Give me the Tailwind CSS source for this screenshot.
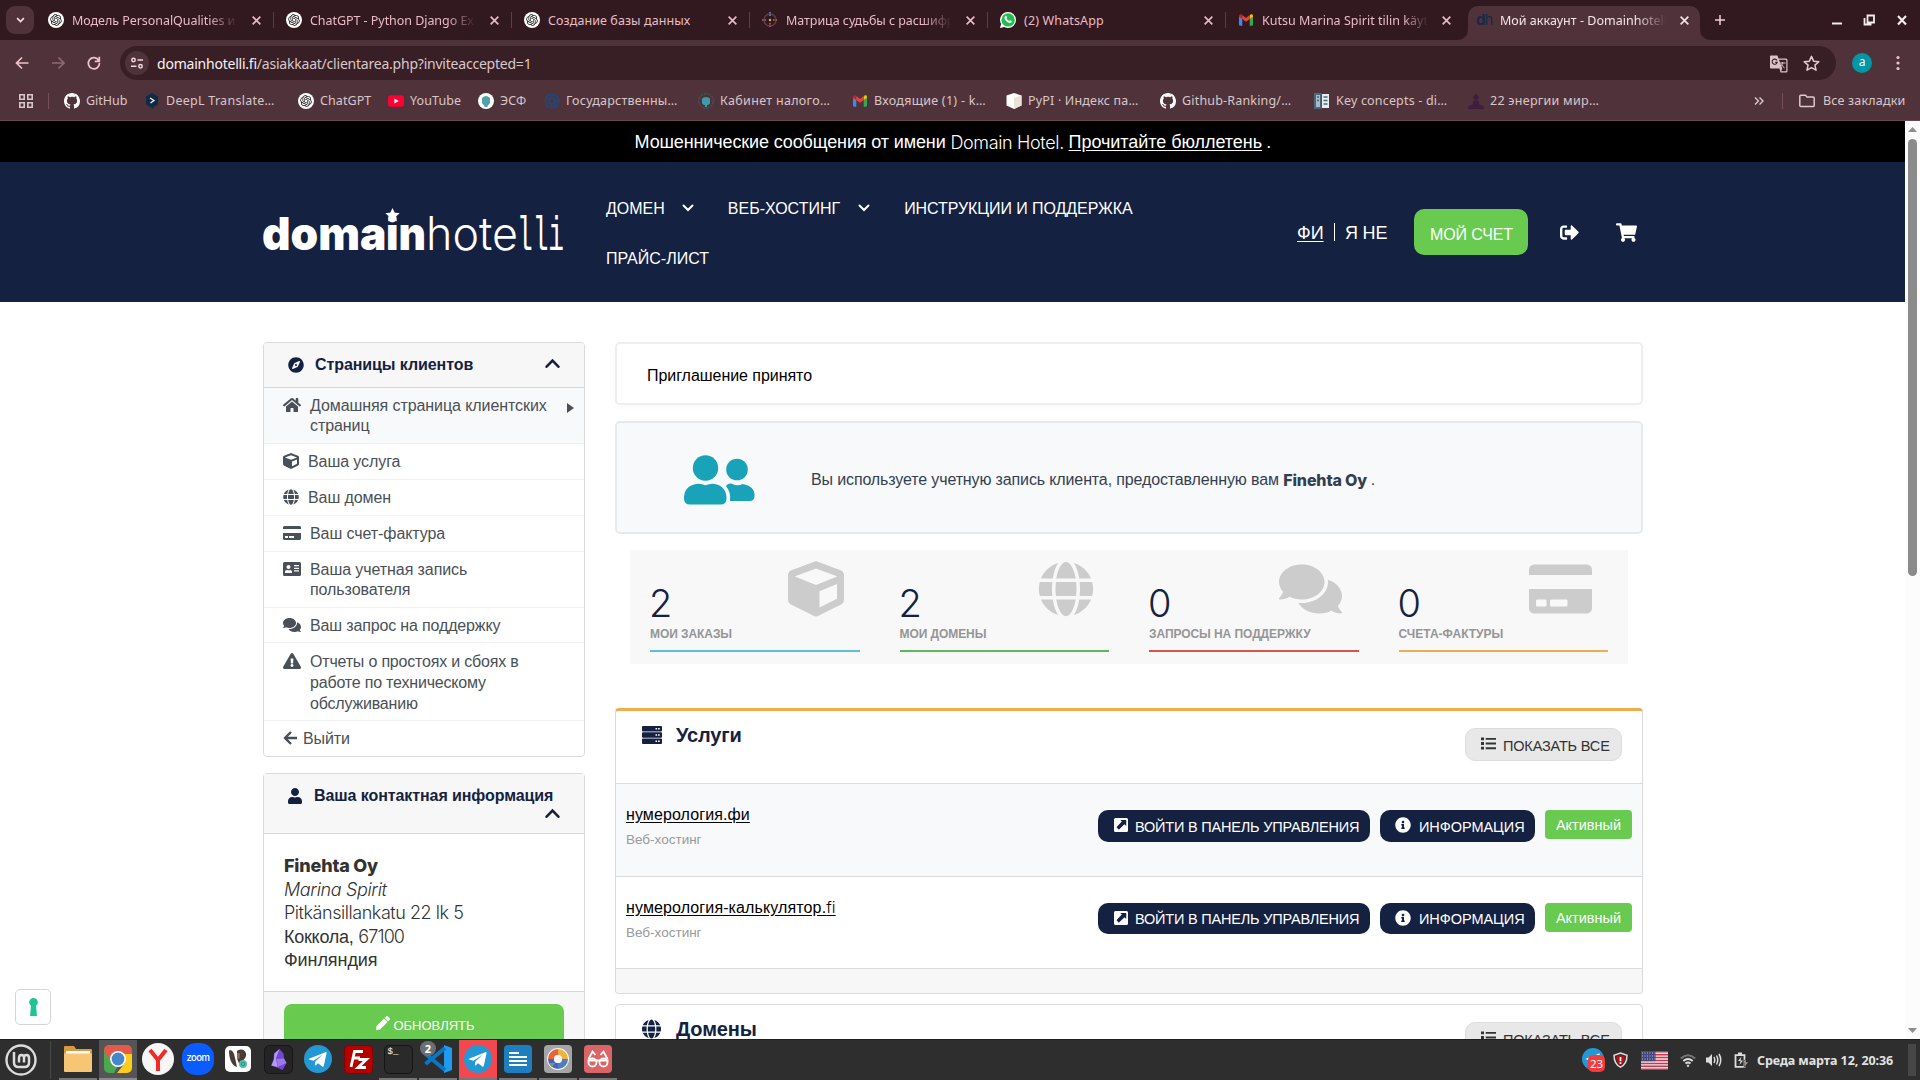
<!DOCTYPE html>
<html lang="ru">
<head>
<meta charset="utf-8">
<title>Мой аккаунт - Domainhotelli</title>
<script src="https://cdn.jsdelivr.net/npm/@tailwindcss/browser@4"></script>
</head>
<body class="w-[1920px] h-[1080px] overflow-hidden bg-white flex flex-col">

<svg class="hidden">
  <symbol id="gpt" viewBox="0 0 32 32"><circle cx="16" cy="16" r="16" fill="#fff"/><g transform="translate(4.5 4.5) scale(.96)"><path fill="#111" d="M22.2819 9.8211a5.9847 5.9847 0 0 0-.5157-4.9108 6.0462 6.0462 0 0 0-6.5098-2.9A6.0651 6.0651 0 0 0 4.9807 4.1818a5.9847 5.9847 0 0 0-3.9977 2.9 6.0462 6.0462 0 0 0 .7427 7.0966 5.98 5.98 0 0 0 .511 4.9107 6.051 6.051 0 0 0 6.5146 2.9001A5.9847 5.9847 0 0 0 13.2599 24a6.0557 6.0557 0 0 0 5.7718-4.2058 5.9894 5.9894 0 0 0 3.9977-2.9001 6.0557 6.0557 0 0 0-.7475-7.0729zm-9.022 12.6081a4.4755 4.4755 0 0 1-2.8764-1.0408l.1419-.0804 4.7783-2.7582a.7948.7948 0 0 0 .3927-.6813v-6.7369l2.02 1.1686a.071.071 0 0 1 .038.052v5.5826a4.504 4.504 0 0 1-4.4945 4.4944zm-9.6607-4.1254a4.4708 4.4708 0 0 1-.5346-3.0137l.142.0852 4.783 2.7582a.7712.7712 0 0 0 .7806 0l5.8428-3.3685v2.3324a.0804.0804 0 0 1-.0332.0615L9.74 19.9502a4.4992 4.4992 0 0 1-6.1408-1.6464zM2.3408 7.8956a4.485 4.485 0 0 1 2.3655-1.9728V11.6a.7664.7664 0 0 0 .3879.6765l5.8144 3.3543-2.0201 1.1685a.0757.0757 0 0 1-.071 0l-4.8303-2.7865A4.504 4.504 0 0 1 2.3408 7.872zm16.5963 3.8558L13.1038 8.364 15.1192 7.2a.0757.0757 0 0 1 .071 0l4.8303 2.7913a4.4944 4.4944 0 0 1-.6765 8.1042v-5.6772a.79.79 0 0 0-.407-.667zm2.0107-3.0231l-.142-.0852-4.7735-2.7818a.7759.7759 0 0 0-.7854 0L9.409 9.2297V6.8974a.0662.0662 0 0 1 .0284-.0615l4.8303-2.7866a4.4992 4.4992 0 0 1 6.6802 4.66zM8.3065 12.863l-2.02-1.1638a.0804.0804 0 0 1-.038-.0567V6.0742a4.4992 4.4992 0 0 1 7.3757-3.4537l-.142.0805L8.704 5.459a.7948.7948 0 0 0-.3927.6813zm1.0976-2.3654l2.602-1.4998 2.6069 1.4998v2.9994l-2.5974 1.4997-2.6067-1.4997Z"/></g></symbol>
  <symbol id="github" viewBox="0 0 16 16"><path fill="#fff" d="M8 0C3.58 0 0 3.58 0 8c0 3.54 2.29 6.53 5.47 7.59.4.07.55-.17.55-.38 0-.19-.01-.82-.01-1.49-2.01.37-2.53-.49-2.69-.94-.09-.23-.48-.94-.82-1.13-.28-.15-.68-.52-.01-.53.63-.01 1.08.58 1.23.82.72 1.21 1.87.87 2.33.66.07-.52.28-.87.51-1.07-1.78-.2-3.64-.89-3.64-3.95 0-.87.31-1.59.82-2.15-.08-.2-.36-1.02.08-2.12 0 0 .67-.21 2.2.82.64-.18 1.32-.27 2-.27s1.36.09 2 .27c1.53-1.04 2.2-.82 2.2-.82.44 1.1.16 1.92.08 2.12.51.56.82 1.27.82 2.15 0 3.07-1.87 3.75-3.65 3.95.29.25.54.73.54 1.48 0 1.07-.01 1.93-.01 2.2 0 .21.15.46.55.38A8.01 8.01 0 0 0 16 8c0-4.42-3.58-8-8-8z"/></symbol>
  <symbol id="gmail" viewBox="0 0 16 16"><path fill="#4285f4" d="M1 4v8.500c0 .8.500 1.200 1.100 1.200H4.300V6.500z"/><path fill="#34a853" d="M15 4v8.500c0 .8-.5 1.200-1.100 1.200H11.700V6.500z"/><path fill="#fbbc04" d="M11.700 3.800V7L15 4.700V3.700c0-1.400-1.500-2-2.500-1.200z"/><path fill="#c5221f" d="M1 3.700v1L4.300 7V3.800l-.8-1.300C2.500 1.700 1 2.300 1 3.700z"/><path fill="#ea4335" d="M4.300 7V3.100L8 5.900l3.700-2.800V7L8 9.800z"/></symbol>
  <symbol id="x" viewBox="0 0 10 10"><path d="M1.500 1.500l7 7M8.500 1.500l-7 7" stroke="currentColor" stroke-width="1.500" fill="none"/></symbol>
  <symbol id="compass" viewBox="0 0 496 512"><path fill="currentColor" d="M225.380 233.370c-12.500 12.500-12.500 32.760 0 45.250 12.490 12.500 32.760 12.500 45.250 0 12.500-12.500 12.500-32.760 0-45.250-12.500-12.490-32.760-12.490-45.250 0zM248 8C111.030 8 0 119.030 0 256s111.030 248 248 248 248-111.030 248-248S384.970 8 248 8zm126.140 148.050L308.170 300.400a31.938 31.938 0 0 1-15.770 15.770l-144.340 65.970c-16.650 7.610-33.810-9.550-26.200-26.200l65.980-144.350a31.938 31.938 0 0 1 15.770-15.770l144.340-65.970c16.650-7.600 33.800 9.550 26.190 26.200z"/></symbol>
  <symbol id="home" viewBox="0 0 576 512"><path fill="currentColor" d="M280.370 148.260L96 300.110V464a16 16 0 0 0 16 16l112.060-.29a16 16 0 0 0 15.920-16V368a16 16 0 0 1 16-16h64a16 16 0 0 1 16 16v95.640a16 16 0 0 0 16 16.050L464 480a16 16 0 0 0 16-16V300L295.670 148.260a12.190 12.190 0 0 0-15.300 0zM571.600 251.470L488 182.560V44.050a12 12 0 0 0-12-12h-56a12 12 0 0 0-12 12v72.610L318.470 43a48 48 0 0 0-61 0L4.340 251.470a12 12 0 0 0-1.600 16.900l25.500 31A12 12 0 0 0 45.150 301l235.220-193.740a12.190 12.190 0 0 1 15.300 0L530.900 301a12 12 0 0 0 16.900-1.600l25.500-31a12 12 0 0 0-1.700-16.930z"/></symbol>
  <symbol id="cube" viewBox="0 0 512 512"><path fill="currentColor" d="M239.100 6.300l-208 78c-18.700 7-31.100 25-31.100 45v225.100c0 18.200 10.300 34.800 26.500 42.900l208 104c13.500 6.800 29.400 6.800 42.900 0l208-104c16.300-8.100 26.500-24.800 26.500-42.900V129.300c0-20-12.400-37.900-31.100-44.900l-208-78C262 2.200 250 2.200 239.100 6.300zM256 68.400l192 72v1.100l-192 78-192-78v-1.100l192-72zm32 356V275.500l160-65v133.900l-160 80z"/></symbol>
  <symbol id="globe" viewBox="0 0 496 512"><path fill="currentColor" d="M336.500 160C322 70.700 287.800 8 248 8s-74 62.700-88.500 152h177zM152 256c0 22.200 1.200 43.500 3.300 64h185.300c2.100-20.500 3.300-41.800 3.300-64s-1.200-43.500-3.300-64H155.300c-2.100 20.500-3.300 41.800-3.300 64zm324.700-96c-28.600-67.900-86.500-120.400-158-141.600 24.400 33.800 41.200 84.700 50 141.600h108zM177.200 18.400C105.800 39.600 47.800 92.100 19.300 160h108c8.700-56.900 25.500-107.800 49.900-141.600zM487.400 192H372.700c2.100 21 3.300 42.500 3.300 64s-1.200 43-3.300 64h114.600c5.500-20.500 8.600-41.800 8.600-64s-3.100-43.500-8.500-64zM120 256c0-21.500 1.200-43 3.300-64H8.600C3.200 212.500 0 233.800 0 256s3.200 43.500 8.600 64h114.600c-2-21-3.200-42.500-3.200-64zm39.500 96c14.500 89.300 48.700 152 88.500 152s74-62.700 88.500-152h-177zm159.300 141.600c71.400-21.200 129.400-73.700 158-141.600h-108c-8.800 56.900-25.600 107.800-50 141.600zM19.300 352c28.600 67.900 86.500 120.400 158 141.600-24.400-33.800-41.200-84.700-50-141.600h-108z"/></symbol>
  <symbol id="card" viewBox="0 0 576 512"><path fill="currentColor" d="M0 432c0 26.500 21.500 48 48 48h480c26.500 0 48-21.500 48-48V256H0v176zm192-68c0-6.600 5.400-12 12-12h136c6.600 0 12 5.400 12 12v40c0 6.600-5.400 12-12 12H204c-6.600 0-12-5.400-12-12v-40zm-128 0c0-6.600 5.400-12 12-12h72c6.600 0 12 5.400 12 12v40c0 6.600-5.400 12-12 12H76c-6.600 0-12-5.400-12-12v-40zM576 80v48H0V80c0-26.500 21.500-48 48-48h480c26.500 0 48 21.500 48 48z"/></symbol>
  <symbol id="idcard" viewBox="0 0 576 512"><path fill="currentColor" fill-rule="evenodd" d="M48 32h480a48 48 0 0 1 48 48v352a48 48 0 0 1-48 48H48a48 48 0 0 1-48-48V80a48 48 0 0 1 48-48zM176 128a64 64 0 1 0 0 128a64 64 0 1 0 0-128zM86 384h180c12 0 22-9 22-20v-19c0-32-30-58-67-58-7 0-20 10-45 10s-38-10-45-10c-37 0-67 26-67 58v19c0 11 10 20 22 20zM360 128h144a8 8 0 0 1 8 8v24a8 8 0 0 1-8 8H360a8 8 0 0 1-8-8v-24a8 8 0 0 1 8-8zM360 212h144a8 8 0 0 1 8 8v24a8 8 0 0 1-8 8H360a8 8 0 0 1-8-8v-24a8 8 0 0 1 8-8zM360 296h144a8 8 0 0 1 8 8v24a8 8 0 0 1-8 8H360a8 8 0 0 1-8-8v-24a8 8 0 0 1 8-8z"/></symbol>
  <symbol id="comments" viewBox="0 0 576 512"><path fill="currentColor" d="M416 192c0-88.400-93.100-160-208-160S0 103.600 0 192c0 34.300 14.100 65.900 38 92-13.400 30.200-35.500 54.200-35.800 54.500-2.200 2.300-2.800 5.700-1.500 8.700S4.800 352 8 352c36.600 0 66.900-12.300 88.700-25 32.200 15.700 70.300 25 111.300 25 114.900 0 208-71.600 208-160zm122 220c23.900-26 38-57.700 38-92 0-66.900-53.500-124.200-129.300-148.100.9 6.600 1.300 13.300 1.300 20.100 0 105.900-107.700 192-240 192-10.800 0-21.300-.8-31.700-1.900C207.800 439.600 281.800 480 368 480c41 0 79.100-9.200 111.300-25 21.800 12.700 52.100 25 88.700 25 3.200 0 6.100-1.900 7.300-4.800 1.300-2.900.7-6.300-1.500-8.700-.3-.3-22.400-24.200-35.800-54.500z"/></symbol>
  <symbol id="warn" viewBox="0 0 576 512"><path fill="currentColor" d="M569.517 440.013C587.975 472.007 564.806 512 527.940 512H48.054c-36.937 0-59.999-40.055-41.577-71.987L246.423 23.985c18.467-32.009 64.720-31.951 83.154 0l239.940 416.028zM288 354c-25.405 0-46 20.595-46 46s20.595 46 46 46 46-20.595 46-46-20.595-46-46-46zm-43.673-165.346l7.418 136c.347 6.364 5.609 11.346 11.982 11.346h48.546c6.373 0 11.635-4.982 11.982-11.346l7.418-136c.375-6.874-5.098-12.654-11.982-12.654h-63.383c-6.884 0-12.356 5.780-11.981 12.654z"/></symbol>
  <symbol id="user" viewBox="0 0 448 512"><path fill="currentColor" d="M224 256c70.700 0 128-57.300 128-128S294.700 0 224 0 96 57.300 96 128s57.300 128 128 128zm89.600 32h-16.700c-22.200 10.200-46.900 16-72.900 16s-50.600-5.800-72.900-16h-16.700C60.200 288 0 348.200 0 422.400V464c0 26.500 21.500 48 48 48h352c26.500 0 48-21.500 48-48v-41.600c0-74.200-60.200-134.400-134.400-134.400z"/></symbol>
  <symbol id="list" viewBox="0 0 16 16"><path fill="currentColor" d="M0 1.500h3.200v3H0zM0 6.500h3.200v3H0zM0 11.500h3.200v3H0zM5 2h11v2H5zM5 7h11v2H5zM5 12h11v2H5z"/></symbol>
  <symbol id="ext" viewBox="0 0 448 448"><path fill="currentColor" fill-rule="evenodd" d="M48 0h352a48 48 0 0 1 48 48v352a48 48 0 0 1-48 48H48a48 48 0 0 1-48-48V48A48 48 0 0 1 48 0zM208 64v8l43 43L90 278a20 20 0 0 0 0 28l52 52a20 20 0 0 0 28 0L333 197l43 43c10 10 16 6 16-8V80c0-9-7-16-16-16z"/></symbol>
  <symbol id="info" viewBox="0 0 512 512"><path fill="currentColor" d="M256 8C119.043 8 8 119.083 8 256c0 136.997 111.043 248 248 248s248-111.003 248-248C504 119.083 392.957 8 256 8zm0 110c23.196 0 42 18.804 42 42s-18.804 42-42 42-42-18.804-42-42 18.804-42 42-42zm56 254c0 6.627-5.373 12-12 12h-88c-6.627 0-12-5.373-12-12v-24c0-6.627 5.373-12 12-12h12v-64h-12c-6.627 0-12-5.373-12-12v-24c0-6.627 5.373-12 12-12h64c6.627 0 12 5.373 12 12v100h12c6.627 0 12 5.373 12 12v24z"/></symbol>
  <symbol id="up" viewBox="0 0 14 10"><path d="M1.500 8L7 2.300 12.500 8" fill="none" stroke="currentColor" stroke-width="2.400" stroke-linecap="round"/></symbol>
  <symbol id="down" viewBox="0 0 12 8"><path d="M1.500 1.500L6 6l4.500-4.500" fill="none" stroke="#fff" stroke-width="2" stroke-linecap="round"/></symbol>
  <symbol id="telegram" viewBox="0 0 28 28"><circle cx="14" cy="14" r="14" fill="#2498d4"/><path fill="#fff" d="M5 13.700l16.300-6.500c.8-.3 1.400.2 1.200 1.200l-2.700 12.400c-.2.900-.8 1.100-1.500.7l-4.300-3.200-2.100 2c-.5.500-1 .2-1-.3l.2-3.300 7.300-6.900-9 5.900-4.200-1.300c-.8-.2-.8-.5-.2-.7z"/></symbol>
</svg>

<!-- Browser window frame -->
<div class="h-[121px] shrink-0 bg-[#50333a] border-b border-[#65494f] font-['Noto_Sans',sans-serif] flex flex-col">
  <div class="h-10 bg-[#32191f] flex text-[12.500px] tracking-[-0.050px] text-[#e9bcc6]">
    <div class="w-10 shrink-0 pt-[6px] pl-[6px]"><div class="size-7 rounded-[9px] bg-[#50333a] flex items-center justify-center"><svg class="w-[9px] h-[6px]" viewBox="0 0 12 8"><path d="M1.500 1.500L6 6l4.500-4.500" fill="none" stroke="#f3dfe3" stroke-width="2.300"/></svg></div></div>

    <div class="w-[238px] shrink-0 flex items-center pl-2 relative"><svg class="size-4 shrink-0"><use href="#gpt"/></svg><div class="ml-2 pt-[2px] w-[166px] overflow-hidden whitespace-nowrap [mask-image:linear-gradient(90deg,#000_82%,transparent)]">Модель PersonalQualities и</div><svg class="size-[11px] ml-[13px]"><use href="#x"/></svg><div class="absolute right-1 top-3 w-px h-4 bg-[#5d3d45]"></div></div>
    <div class="w-[238px] shrink-0 flex items-center pl-2 relative"><svg class="size-4 shrink-0"><use href="#gpt"/></svg><div class="ml-2 pt-[2px] w-[166px] overflow-hidden whitespace-nowrap [mask-image:linear-gradient(90deg,#000_82%,transparent)]">ChatGPT - Python Django Ex</div><svg class="size-[11px] ml-[13px]"><use href="#x"/></svg><div class="absolute right-1 top-3 w-px h-4 bg-[#5d3d45]"></div></div>
    <div class="w-[238px] shrink-0 flex items-center pl-2 relative"><svg class="size-4 shrink-0"><use href="#gpt"/></svg><div class="ml-2 pt-[2px] w-[166px] overflow-hidden whitespace-nowrap tracking-[0.080px]">Создание базы данных</div><svg class="size-[11px] ml-[13px]"><use href="#x"/></svg><div class="absolute right-1 top-3 w-px h-4 bg-[#5d3d45]"></div></div>
    <div class="w-[238px] shrink-0 flex items-center pl-2 relative"><svg class="size-4 shrink-0" viewBox="0 0 16 16"><circle cx="8" cy="8" r="6" fill="none" stroke="#5b3f49" stroke-width="1.400"/><path d="M8 0v5" stroke="#5f6fb0" stroke-width="2" stroke-dasharray="1.500 1"/><path d="M8 11v5" stroke="#b04a4a" stroke-width="2" stroke-dasharray="1.500 1"/><path d="M0 8h5M11 8h5" stroke="#905a58" stroke-width="2" stroke-dasharray="1.500 1"/><circle cx="8" cy="8" r="1.200" fill="#d9b25c"/></svg><div class="ml-2 pt-[2px] w-[166px] overflow-hidden whitespace-nowrap tracking-[-0.050px] [mask-image:linear-gradient(90deg,#000_82%,transparent)]">Матрица судьбы с расшифр</div><svg class="size-[11px] ml-[13px]"><use href="#x"/></svg><div class="absolute right-1 top-3 w-px h-4 bg-[#5d3d45]"></div></div>
    <div class="w-[238px] shrink-0 flex items-center pl-2 relative"><svg class="size-4 shrink-0" viewBox="0 0 16 16"><path fill="#fff" d="M8 0a8 8 0 0 1 0 16 8 8 0 0 1-3.800-1L0 16l1.100-4A8 8 0 0 1 8 0z"/><circle cx="8.100" cy="7.900" r="6.700" fill="#1fbf4f"/><path fill="#fff" d="M5.200 4.200c.4-.5 1.100-.5 1.300 0l.6 1.300c.1.300 0 .5-.5 1.100.6 1.200 1.500 1.900 2.600 2.400.5-.7.700-.9 1-.7l1.300.6c.5.300.3 1.200-.2 1.600-.8.700-2 .6-3.600-.3C6 9.200 4.200 7 4.500 5.400c.1-.5.400-.9.700-1.200z"/></svg><div class="ml-2 pt-[2px] w-[166px] overflow-hidden whitespace-nowrap tracking-[0.150px]">(2) WhatsApp</div><svg class="size-[11px] ml-[13px]"><use href="#x"/></svg><div class="absolute right-1 top-3 w-px h-4 bg-[#5d3d45]"></div></div>
    <div class="w-[238px] shrink-0 flex items-center pl-2 relative"><svg class="size-4 shrink-0"><use href="#gmail"/></svg><div class="ml-2 pt-[2px] w-[166px] overflow-hidden whitespace-nowrap tracking-[0.020px] [mask-image:linear-gradient(90deg,#000_85%,transparent)]">Kutsu Marina Spirit tilin käyt</div><svg class="size-[11px] ml-[13px]"><use href="#x"/></svg></div>
    <div class="w-[232px] mt-[6px] h-[34px] shrink-0 flex items-center pl-2 pb-[6px] rounded-t-[10px] bg-[#50333a] text-[#f6e3e7] relative">
      <svg class="absolute -left-[10px] bottom-0 size-[10px]" viewBox="0 0 10 10"><path fill="#50333a" d="M10 0v10H0A10 10 0 0 0 10 0z"/></svg>
      <svg class="absolute -right-[10px] bottom-0 size-[10px]" viewBox="0 0 10 10"><path fill="#50333a" d="M0 0v10h10A10 10 0 0 1 0 0z"/></svg>
      <div class="w-4 shrink-0 font-[Inter,sans-serif] text-[15px] tracking-[-1px] leading-4 text-[#1b2748]"><b>d</b>h</div><div class="ml-2 pt-[2px] w-[166px] overflow-hidden whitespace-nowrap tracking-[0.020px] [mask-image:linear-gradient(90deg,#000_82%,transparent)]">Мой аккаунт - Domainhotelli</div><svg class="size-[11px] ml-[13px]"><use href="#x"/></svg></div>
    <div class="w-[40px] flex items-center justify-center"><svg class="size-3" viewBox="0 0 12 12"><path d="M6 1v10M1 6h10" stroke="#f0cdd4" stroke-width="1.500"/></svg></div>
    <div class="flex-1"></div>
    <svg class="w-[90px] h-10 mr-1" viewBox="0 0 90 40"><path d="M6 23.500h10" stroke="#f5eaec" stroke-width="2"/><path d="M41.500 15.500h6.500v7h-6.500zM38.500 18v6.500h7" stroke="#f5eaec" stroke-width="1.800" fill="none"/><path d="M72 16l8 8.500M80 16l-8 8.500" stroke="#f5eaec" stroke-width="2.200"/></svg>
  </div>
  <div class="h-[46px] flex items-center">
    <svg class="w-[120px] h-9 shrink-0" viewBox="0 0 120 36" fill="none" stroke-width="1.700"><path d="M28.500 18H17M22 12.500L16.500 18l5.500 5.500" stroke="#efc3cc"/><path d="M52 18h11.500M58.500 12.500L64 18l-5.500 5.500" stroke="#8c6a72"/><path d="M98.800 15.500A5.600 5.600 0 1 0 99.500 18M99.300 11.800v4.500h-4.500" stroke="#efc3cc"/></svg>
    <div class="w-[1716px] h-[34px] rounded-full bg-[#381f26] flex items-center pl-[5px] text-[14px] tracking-[-0.220px] text-[#d9c8cb]">
      <div class="size-6 rounded-full bg-[#50333a] flex items-center justify-center"><svg class="size-[14px]" viewBox="0 0 14 14" fill="none" stroke="#eed9dd" stroke-width="1.500"><circle cx="3.500" cy="4" r="1.700"/><path d="M7.500 4H13M1 10.200h5.500"/><circle cx="10.500" cy="10.200" r="1.700"/></svg></div>
      <div class="ml-2 flex-1"><span class="text-[#fbf0f2]">domainhotelli.fi</span>/asiakkaat/clientarea.php?inviteaccepted=1</div>
      <svg class="w-[18px] h-[18px] mr-[15px] mt-px" viewBox="0 0 18 17"><path fill="#d9c3c7" d="M1 0h6.500l1 3H16a1.500 1.500 0 0 1 1.500 1.500v11A1.500 1.500 0 0 1 16 17h-5.500l-1-4H1a1 1 0 0 1-1-1V1a1 1 0 0 1 1-1z"/><path fill="#381f26" d="M9 4.200h6.700l.6.600v10.400l-.6.600h-4.500l1-2.800z"/><path d="M7 4.900A2.600 2.600 0 1 0 7.300 6.700H5" fill="none" stroke="#381f26" stroke-width="1.100"/><path d="M10 7.500h5.500M12.500 6.500v1c0 2-1.200 3.200-2 3.800M11.500 9l3 3.800" stroke="#d9c3c7" fill="none"/></svg>
      <svg class="size-[17px] mr-[16px]" viewBox="0 0 16 16"><path fill="none" stroke="#e3cfd3" stroke-width="1.400" stroke-linejoin="round" d="M8 1.300l2 4.500 4.900.5-3.700 3.200 1.100 4.800L8 11.800l-4.300 2.500 1.100-4.800L1.100 6.300 6 5.800z"/></svg>
    </div>
    <div class="ml-4 size-5 rounded-full bg-[#0097a7] text-white text-[12px] leading-[18px] text-center">a</div>
    <svg class="ml-6 w-1 h-4" viewBox="0 0 4 16" fill="#efc3cc"><circle cx="2" cy="2.500" r="1.600"/><circle cx="2" cy="8" r="1.600"/><circle cx="2" cy="13.500" r="1.600"/></svg>
  </div>
  <div class="h-[30px] flex items-center text-[12.500px] text-[#d8c6c9] whitespace-nowrap">
    <svg class="ml-[19px] size-[14px] shrink-0" viewBox="0 0 14 14" fill="none" stroke="#d8c6c9" stroke-width="1.600"><path d="M.8.8h4.400v4.400H.8zM8.800.8h4.400v4.400H8.800zM.8 8.800h4.400v4.400H.8zM8.800 8.800h4.400v4.400H8.800z"/></svg>
    <div class="ml-[15px] w-px h-4 bg-[#735057] shrink-0"></div>
    <div class="ml-[15px] w-[80px] shrink-0 flex items-center gap-[6px]"><svg class="size-4"><use href="#github"/></svg>GitHub</div>
    <div class="w-[154px] shrink-0 flex items-center gap-[6px] tracking-[0.270px]"><svg class="size-4" viewBox="0 0 16 16"><path fill="#0f2b46" d="M8 0l6 3.500v8L9.500 14v2L2 11.500v-8z"/><path d="M6 5l4 2.500L6.500 10" fill="none" stroke="#fff" stroke-width="1.200"/></svg>DeepL Translate…</div>
    <div class="w-[90px] shrink-0 flex items-center gap-[6px] tracking-[0.080px]"><svg class="size-4"><use href="#gpt"/></svg>ChatGPT</div>
    <div class="w-[90px] shrink-0 flex items-center gap-[6px] tracking-[0.100px]"><svg class="size-4" viewBox="0 0 16 16"><rect y="2.300" width="16" height="11.400" rx="3" fill="#ff0033"/><path d="M6.400 5.500v5l4.300-2.500z" fill="#fff"/></svg>YouTube</div>
    <div class="w-[66px] shrink-0 flex items-center gap-[6px] tracking-[0.200px]"><svg class="size-4" viewBox="0 0 16 16"><circle cx="8" cy="8" r="8" fill="#fff"/><path fill="#4fa3a8" d="M4 5l2-1.500L8 3l2 .5L12 5v5l-2 2.500H9.500V14h-3v-1.500H6L4 10z"/></svg>ЭСФ</div>
    <div class="w-[154px] shrink-0 flex items-center gap-[6px] tracking-[0.250px]"><svg class="size-4" viewBox="0 0 16 16"><circle cx="8" cy="8" r="6.500" fill="none" stroke="#1e4a80" stroke-width="2.500" stroke-dasharray="1.500 .8"/><circle cx="8" cy="8" r="3.200" fill="none" stroke="#1e4a80" stroke-width="3" stroke-dasharray="1.500 .8"/></svg>Государственны…</div>
    <div class="w-[154px] shrink-0 flex items-center gap-[6px] tracking-[0.320px]"><svg class="size-4" viewBox="0 0 16 16"><circle cx="8" cy="8" r="7.300" fill="none" stroke="#3d5f68" stroke-width="1" stroke-dasharray="3 1"/><path fill="#3f9ba8" d="M4 5.500l2-1L8 4l2 .5 2 1v5l-2 1.500H9V14H7v-2H6l-2-1.500z"/></svg>Кабинет налого…</div>
    <div class="w-[154px] shrink-0 flex items-center gap-[6px] tracking-[0.280px]"><svg class="size-4"><use href="#gmail"/></svg>Входящие (1) - k…</div>
    <div class="w-[154px] shrink-0 flex items-center gap-[6px] tracking-[0.180px]"><svg class="size-4" viewBox="0 0 16 16"><path fill="#fdfdfb" d="M8 0l7.500 2.500v10L8 16 .5 12.500v-10z"/><path fill="#e6e3da" d="M8 5l7.500-2.500v10L8 16z"/></svg>PyPI · Индекс па…</div>
    <div class="w-[154px] shrink-0 flex items-center gap-[6px] tracking-[0.180px]"><svg class="size-4"><use href="#github"/></svg>Github-Ranking/…</div>
    <div class="w-[154px] shrink-0 flex items-center gap-[6px] tracking-[0.180px]"><svg class="size-4" viewBox="0 0 16 16"><path fill="#49697a" d="M0 0h7.500v16H0z"/><path fill="#e7edf0" d="M8 1h7v14H8z"/><path fill="#a9bcc6" d="M2 2h4v12H2z"/><path stroke="#49697a" stroke-width="1.300" d="M9.500 4h4M9.500 7.500h4M9.500 11h4M3 4h2M3 7.500h2"/></svg>Key concepts - di…</div>
    <div class="w-[154px] shrink-0 flex items-center gap-[6px] tracking-[0.270px]"><svg class="size-4" viewBox="0 0 16 16"><path fill="#3d1d40" d="M8 .5l3 3.500-1.500 3H6.500L5 4zM5.500 7.500h5l1 4L16 13.500V16H0v-2.500l4.500-2z"/></svg>22 энергии мир…</div>
    <div class="flex-1"></div>
    <svg class="w-[10px] h-2 shrink-0" viewBox="0 0 10 8"><path d="M1 .5L4.500 4 1 7.500M5.500.5L9 4 5.500 7.500" stroke="#dccacd" stroke-width="1.400" fill="none"/></svg>
    <div class="ml-[18px] w-px h-4 bg-[#735057] shrink-0"></div>
    <svg class="ml-4 w-4 h-[14px] shrink-0" viewBox="0 0 16 14"><path d="M.8 2.500v9q0 1 1 1h12.400q1 0 1-1V4q0-1-1-1H8L6.500 1.300H1.800q-1 0-1 1.200z" fill="none" stroke="#dccacd" stroke-width="1.500"/></svg>
    <div class="ml-2 w-[82px] mr-[15px] shrink-0 tracking-[0.180px]">Все закладки</div>
  </div>
</div>

<!-- Page -->
<div class="h-[918px] shrink-0 flex overflow-hidden">
<div class="w-[1905px] shrink-0 flex flex-col relative overflow-hidden font-['Liberation_Sans',Arial,sans-serif]">
  <div class="h-[41px] shrink-0 bg-black text-white text-[18px] pt-px flex items-center justify-center whitespace-pre"><span class="tracking-[-0.130px]">Мошеннические сообщения от имени </span><span class="font-[Inter,sans-serif] font-light tracking-[-0.350px]">Domain Hotel. </span><span class="underline underline-offset-2 tracking-[-0.050px]">Прочитайте бюллетень</span><span class="tracking-[-0.800px]"> .</span></div>

  <div class="h-[140px] shrink-0 bg-[#152141] text-white flex pl-[263px]">
    <svg class="w-[302px] h-[44px] mt-[47px] shrink-0 overflow-visible" viewBox="0 0 302 44" fill="#fff">
      <text y="41" font-family="Inter" font-weight="900" font-size="46"><tspan x="-1" textLength="124.500" lengthAdjust="spacingAndGlyphs">doma</tspan></text>
      <text x="123" y="41" font-family="Inter" font-weight="900" font-size="46" textLength="40" lengthAdjust="spacingAndGlyphs">in</text>
      <text x="163" y="41" font-family="Inter" font-weight="300" font-size="46" textLength="92" lengthAdjust="spacingAndGlyphs">hote</text>
      <text x="254" y="41" font-family="Liberation Mono" font-size="49" textLength="47" lengthAdjust="spacingAndGlyphs">lli</text>
      <path d="M129.500 .5l1.700 3.600 4 .5-3 2.700.8 4-3.500-2-3.500 2 .8-4-3-2.700 4-.5z" stroke="#fff" stroke-width="1.300"/>
    </svg>
    <div class="ml-[41px] w-[680px] pt-[22px] text-[16px] shrink-0">
      <div class="h-[50px] flex items-center">
        <span>ДОМЕН</span><svg class="ml-[17px] w-3 h-2 -mt-[2px]"><use href="#down"/></svg>
        <span class="ml-[34px]">ВЕБ-ХОСТИНГ</span><svg class="ml-[18px] w-3 h-2 -mt-[2px]"><use href="#down"/></svg>
        <span class="ml-[34px] tracking-[-0.070px]">ИНСТРУКЦИИ И ПОДДЕРЖКА</span>
      </div>
      <div class="h-[50px] flex items-center">ПРАЙС-ЛИСТ</div>
    </div>
    <div class="h-[140px] flex items-center ml-[11px] text-[18px] shrink-0">
      <span class="underline underline-offset-2 w-[27px] pt-[2px]">ФИ</span>
      <div class="ml-[10px] w-px h-[18px] bg-white"></div>
      <span class="ml-[10px] w-[69px] pt-[2px] tracking-[-0.200px]">Я НЕ</span>
      <div class="w-[114px] h-[46px] rounded-[10px] bg-[#68ca4f] flex items-center justify-center text-[16px] tracking-[-0.100px] pl-px pt-[6px]">МОЙ СЧЕТ</div>
      <svg class="ml-8 size-[19px]" viewBox="0 0 512 512"><path fill="#fff" d="M497 273L329 441c-15 15-41 4.500-41-17v-96H152c-13.300 0-24-10.700-24-24v-96c0-13.300 10.700-24 24-24h136V88c0-21.400 25.900-32 41-17l168 168c9.300 9.400 9.300 24.600 0 34zM192 436v-40c0-6.600-5.400-12-12-12H96c-17.700 0-32-14.300-32-32V160c0-17.700 14.300-32 32-32h84c6.600 0 12-5.400 12-12V76c0-6.600-5.400-12-12-12H96c-53 0-96 43-96 96v192c0 53 43 96 96 96h84c6.600 0 12-5.400 12-12z"/></svg>
      <svg class="ml-[37px] w-[21px] h-[19px]" viewBox="0 0 576 512"><path fill="#fff" d="M528.120 301.319l47.273-208C578.806 78.301 567.391 64 551.990 64H159.208l-9.166-44.810C147.758 8.021 137.930 0 126.529 0H24C10.745 0 0 10.745 0 24v16c0 13.255 10.745 24 24 24h69.883l70.248 343.435C147.325 417.100 136 435.222 136 456c0 30.928 25.072 56 56 56s56-25.072 56-56c0-15.674-6.447-29.835-16.824-40h209.647C430.447 426.165 424 440.326 424 456c0 30.928 25.072 56 56 56s56-25.072 56-56c0-22.172-12.888-41.332-31.579-50.405l5.517-24.276c3.413-15.018-8.002-29.319-23.403-29.319H218.117l-6.545-32h293.145c11.206 0 20.920-7.754 23.403-18.681z"/></svg>
    </div>
  </div>

  <div class="flex pl-[263px] pt-10 items-start">
    <!-- Sidebar -->
    <div class="w-[322px] shrink-0 flex flex-col gap-4 tracking-[-0.080px]">
      <div class="border border-[#dadada] rounded-[4px] overflow-hidden text-[16px] leading-[20.500px] text-[#495057]">
        <div class="h-[45px] bg-[#f7f7f7] border-b border-[#d6d6d6] flex items-center pl-6 pr-[24px] font-bold text-[#152141]"><svg class="size-4"><use href="#compass"/></svg><span class="ml-[11px] flex-1">Страницы клиентов</span><svg class="w-[15px] h-[11px] -mt-[3px]"><use href="#up"/></svg></div>
        <div class="h-[56px] bg-[#f8f9fb] border-b border-[#f1f1f1] flex pt-[8px] pl-[19px]"><svg class="w-[18px] h-4 mt-px shrink-0"><use href="#home"/></svg><span class="ml-[9px] w-[245px] leading-5 shrink-0">Домашняя страница клиентских страниц</span><svg class="ml-[12px] mt-[7px] w-[7px] h-[10px]" viewBox="0 0 7 10"><path d="M0 0l7 5-7 5z" fill="#495057"/></svg></div>
        <div class="h-9 border-b border-[#f1f1f1] flex pt-[8px] pl-[19px]"><svg class="size-4 mt-px"><use href="#cube"/></svg><span class="ml-[9px]">Ваша услуга</span></div>
        <div class="h-9 border-b border-[#f1f1f1] flex pt-[8px] pl-[19px]"><svg class="size-4 mt-px"><use href="#globe"/></svg><span class="ml-[9px]">Ваш домен</span></div>
        <div class="h-9 border-b border-[#f1f1f1] flex pt-[8px] pl-[19px]"><svg class="w-[18px] h-4 mt-px"><use href="#card"/></svg><span class="ml-[9px]">Ваш счет-фактура</span></div>
        <div class="h-[56px] border-b border-[#f1f1f1] flex pt-[8px] pl-[19px]"><svg class="w-[18px] h-4 mt-px shrink-0"><use href="#idcard"/></svg><span class="ml-[9px] w-[180px] leading-5">Ваша учетная запись пользователя</span></div>
        <div class="h-[35px] border-b border-[#f1f1f1] flex pt-[8px] pl-[19px]"><svg class="w-[18px] h-4 mt-px"><use href="#comments"/></svg><span class="ml-[9px] tracking-[-0.150px]">Ваш запрос на поддержку</span></div>
        <div class="h-[78px] border-b border-[#f1f1f1] flex pt-[8px] pl-[19px]"><svg class="w-[18px] h-4 mt-[2px] shrink-0"><use href="#warn"/></svg><span class="ml-[9px] w-[225px] leading-[21px] tracking-[-0.190px]">Отчеты о простоях и сбоях в работе по техническому обслуживанию</span></div>
        <div class="h-[35px] flex pt-[8px] pl-[19px]"><svg class="w-[15px] h-4 mt-px" viewBox="0 0 15 16"><path d="M8 2L2 8l6 6M2.500 8H14" fill="none" stroke="#495057" stroke-width="2.400"/></svg><span class="ml-[5px]">Выйти</span></div>
      </div>
      <div class="border border-[#dadada] rounded-[4px] text-[#333] text-[18px] leading-[23.500px]">
        <div class="h-[60px] bg-[#f7f7f7] border-b border-[#d6d6d6] pl-6 pr-[24px] pt-3 font-bold text-[#152141] text-[16px] leading-5"><div class="flex items-center whitespace-nowrap"><svg class="w-[14px] h-4 mr-[1px]"><use href="#user"/></svg><span class="ml-[11px]">Ваша контактная информация</span></div><svg class="w-[15px] h-[11px] ml-auto mt-[2px]"><use href="#up"/></svg></div>
        <div class="h-[158px] border-b border-[#d6d6d6] pl-5 pt-[20px]">
          <div class="font-[Inter,sans-serif] font-extrabold tracking-[-0.180px]">Finehta Oy</div>
          <div class="font-[Inter,sans-serif] font-light italic tracking-[-0.350px]">Marina Spirit</div>
          <div class="font-[Inter,sans-serif] font-light tracking-[-0.450px]">Pitkänsillankatu 22 lk 5</div>
          <div class="tracking-[-0.250px]">Коккола, <span class="font-[Inter,sans-serif] font-light tracking-[-0.900px]">67100</span></div>
          <div>Финляндия</div>
        </div>
        <div class="bg-[#f7f7f7] h-[80px] px-5 pt-3"><div class="h-[42px] rounded-[8px] bg-[#68ca4f] text-white text-[13px] tracking-normal flex items-center justify-center pt-[2px] pl-[3px]"><svg class="size-[14px] mr-[3px] -mt-[6px]" viewBox="0 0 512 512"><path fill="#fff" d="M497.900 142.100l-46.100 46.100c-4.700 4.700-12.300 4.700-17 0l-111-111c-4.700-4.700-4.700-12.300 0-17l46.100-46.100c18.700-18.700 49.100-18.700 67.900 0l60.100 60.100c18.800 18.700 18.800 49.100 0 67.900zM284.200 99.800L21.600 362.400.4 483.900c-2.900 16.400 11.400 30.600 27.800 27.800l121.500-21.300 262.600-262.600c4.700-4.700 4.700-12.300 0-17l-111-111c-4.800-4.700-12.400-4.700-17.100 0z"/></svg>ОБНОВЛЯТЬ</div></div>
      </div>
    </div>

    <!-- Main column -->
    <div class="ml-[30px] w-[1028px] shrink-0 flex flex-col">
      <div class="h-[63px] rounded-[5px] border-2 border-[#eee] shadow-[0_2px_8px_rgba(0,0,0,0.03)] flex items-center pl-[30px] pt-1 text-[16px] tracking-[-0.050px] text-black">Приглашение принято</div>
      <div class="mt-4 h-[113px] rounded-[5px] border-2 border-[#e6eaee] bg-[#f8f9fb] flex items-center pt-[4px] text-[16px] text-[#333f50] whitespace-pre"><svg class="ml-[67px] w-[71px] h-[50px]" viewBox="0 0 71 50" fill="#19a3b9"><circle cx="21.500" cy="13" r="12.700"/><circle cx="53" cy="14.500" r="10.800"/><path d="M12 29q4-1 9.500 1.200Q27 28 31 29q11.500 2.500 11.500 14.500 0 6-6 6H6q-6 0-6-6Q0 31 12 29z"/><path d="M42 31q2-3 6-2.300 2.500 1.600 5.500 1.600t5-1.400Q71 31 70.500 41q0 5-5 5H46q1-9-4-15z"/></svg><span class="ml-[56px] pt-px tracking-[-0.130px]">Вы используете учетную запись клиента, предоставленную вам </span><span class="font-[Inter,sans-serif] font-extrabold tracking-[-0.130px]">Finehta Oy</span><span class="tracking-[-0.800px]"> .</span></div>

      <div class="mt-4 mx-[15px] h-[114px] bg-[#f8f8f8] grid grid-cols-4 text-[12px] tracking-[-0.070px] font-bold text-[#959595]">
        <div class="px-5 relative"><svg class="absolute right-[36px] top-[11px] size-[56px] text-[#ccc]"><use href="#cube"/></svg><div class="pt-[31px] -ml-px h-[75px] font-[Inter,sans-serif] font-light text-[38px] leading-[44px] text-[#152141]">2</div><div class="border-b-2 border-[#5bc0de] h-[27px] whitespace-nowrap">МОИ ЗАКАЗЫ</div></div>
        <div class="px-5 relative"><svg class="absolute right-[35px] top-[11px] size-[56px] text-[#ccc]"><use href="#globe"/></svg><div class="pt-[31px] -ml-px h-[75px] font-[Inter,sans-serif] font-light text-[38px] leading-[44px] text-[#152141]">2</div><div class="border-b-2 border-[#5cb85c] h-[27px] whitespace-nowrap">МОИ ДОМЕНЫ</div></div>
        <div class="px-5 relative"><svg class="absolute right-[37px] top-[11px] w-[63px] h-[56px] text-[#ccc]"><use href="#comments"/></svg><div class="pt-[31px] -ml-px h-[75px] font-[Inter,sans-serif] font-light text-[38px] leading-[44px] text-[#152141]">0</div><div class="border-b-2 border-[#d9534f] h-[27px] whitespace-nowrap">ЗАПРОСЫ НА ПОДДЕРЖКУ</div></div>
        <div class="px-5 relative"><svg class="absolute right-[36px] top-[11px] w-[63px] h-[56px] text-[#ccc]"><use href="#card"/></svg><div class="pt-[31px] -ml-px h-[75px] font-[Inter,sans-serif] font-light text-[38px] leading-[44px] text-[#152141]">0</div><div class="border-b-2 border-[#f0ad4e] h-[27px] whitespace-nowrap tracking-normal">СЧЕТА-ФАКТУРЫ</div></div>
      </div>

      <div class="mt-[44px] h-[286px] rounded-[4px] border border-[#dadada] border-t-[3px] border-t-[#f0ad4e] flex flex-col overflow-hidden">
        <div class="h-[73px] shrink-0 border-b border-[#dadada] flex pl-[26px] pr-[20px] text-[#152141]"><svg class="mt-[15px] w-5 h-[18px]" viewBox="0 0 20 18"><path fill="#152141" d="M1 0h18q1 0 1 1v3.500q0 1-1 1H1q-1 0-1-1V1q0-1 1-1zM1 6.300h18q1 0 1 1v3.500q0 1-1 1H1q-1 0-1-1V7.300q0-1 1-1zM1 12.500h18q1 0 1 1V17q0 1-1 1H1q-1 0-1-1v-3.500q0-1 1-1z"/><path stroke="#fff" stroke-width="1.600" stroke-dasharray="1.600 1" d="M13.500 2.700h4.400M13.500 9h4.400M13.500 15.300h4.400"/></svg><div class="ml-[14px] mt-[10px] text-[20px] leading-7 font-bold tracking-[-0.150px] flex-1">Услуги</div><div class="mt-[17px] w-[157px] h-[33px] rounded-[10px] border border-[#dcdcdc] bg-[#e8e8e8] text-[#333] text-[14.500px] tracking-[-0.170px] flex items-center pl-[15px]"><svg class="size-[15px] -mt-[2px]"><use href="#list"/></svg><span class="ml-[7px] pt-[4px] whitespace-nowrap">ПОКАЗАТЬ ВСЕ</span></div></div>
        <div class="h-[93px] shrink-0 border-b border-[#dadada] bg-[#f8f9fb] flex pl-[10px] pr-[10px] pt-[26px] gap-[10px]">
          <div class="flex-1 -mt-[6px]"><div class="text-[16px] leading-[19px] mt-[1px] tracking-[0.100px] text-black underline underline-offset-2">нумерология.фи</div><div class="mt-[8px] text-[13.500px] leading-4 text-[#999]">Веб-хостинг</div></div>
          <div class="w-[272px] h-8 rounded-[10px] bg-[#152141] text-white text-[14.500px] tracking-[-0.200px] flex items-center pl-4 whitespace-nowrap"><svg class="size-[14px] -mt-[2px]"><use href="#ext"/></svg><span class="ml-[7px] pt-[3px]">ВОЙТИ В ПАНЕЛЬ УПРАВЛЕНИЯ</span></div>
          <div class="w-[155px] h-8 rounded-[10px] bg-[#152141] text-white text-[14.500px] tracking-[-0.050px] flex items-center pl-[15px]"><svg class="size-4 -mt-[2px]"><use href="#info"/></svg><span class="ml-2 pt-[3px]">ИНФОРМАЦИЯ</span></div>
          <div class="w-[87px] h-[29px] rounded-[4px] bg-[#68ca4f] text-white text-[14.500px] flex items-center justify-center pt-[2px]">Активный</div>
        </div>
        <div class="h-[92px] shrink-0 border-b border-[#dadada] flex pl-[10px] pr-[10px] pt-[26px] gap-[10px]">
          <div class="flex-1 -mt-[6px]"><div class="text-[16px] leading-[19px] mt-[1px] tracking-[0.120px] text-black underline underline-offset-2">нумерология-калькулятор.<span class="font-[Inter,sans-serif] font-light">fi</span></div><div class="mt-[8px] text-[13.500px] leading-4 text-[#999]">Веб-хостинг</div></div>
          <div class="w-[272px] h-[31px] rounded-[10px] bg-[#152141] text-white text-[14.500px] tracking-[-0.200px] flex items-center pl-4 whitespace-nowrap"><svg class="size-[14px] -mt-[2px]"><use href="#ext"/></svg><span class="ml-[7px] pt-[3px]">ВОЙТИ В ПАНЕЛЬ УПРАВЛЕНИЯ</span></div>
          <div class="w-[155px] h-[31px] rounded-[10px] bg-[#152141] text-white text-[14.500px] tracking-[-0.050px] flex items-center pl-[15px]"><svg class="size-4 -mt-[2px]"><use href="#info"/></svg><span class="ml-2 pt-[3px]">ИНФОРМАЦИЯ</span></div>
          <div class="w-[87px] h-[29px] rounded-[4px] bg-[#68ca4f] text-white text-[14.500px] flex items-center justify-center pt-[2px]">Активный</div>
        </div>
        <div class="flex-1 bg-[#f7f7f7]"></div>
      </div>

      <div class="mt-[10px] h-[80px] rounded-[4px] border border-[#dadada] flex pl-[26px] pr-[20px] text-[#152141]"><svg class="mt-[14px] w-[19px] h-5"><use href="#globe"/></svg><div class="ml-[15px] mt-[10px] text-[20px] leading-7 font-bold tracking-[-0.150px] flex-1">Домены</div><div class="mt-[17px] w-[157px] h-[33px] rounded-[10px] border border-[#dcdcdc] bg-[#e8e8e8] text-[#333] text-[14.500px] tracking-[-0.170px] flex items-center pl-[15px]"><svg class="size-[15px] -mt-[2px]"><use href="#list"/></svg><span class="ml-[7px] pt-[4px] whitespace-nowrap">ПОКАЗАТЬ ВСЕ</span></div></div>
    </div>
  </div>

  <div class="absolute left-[15px] top-[868px] w-9 h-9 rounded-[5px] bg-white border border-[#d5d5d5] flex items-center justify-center"><svg class="w-[9px] h-[18px]" viewBox="0 0 9 18"><path fill="#1fc494" d="M4.500 0a4.300 4.300 0 0 1 2.500 7.800L8 18H1L2 7.800A4.300 4.300 0 0 1 4.500 0z"/></svg></div>
</div>
<div class="w-[15px] shrink-0 bg-[#fcfcfc] flex flex-col items-center">
  <svg class="mt-[6px] w-[9px] h-[5px] shrink-0" viewBox="0 0 9 5"><path d="M4.500 0L9 5H0z" fill="#8b8b8b"/></svg>
  <div class="mt-[7px] w-[9px] h-[437px] rounded-full bg-[#8b8b8b]"></div>
  <svg class="mt-auto mb-[6px] w-[9px] h-[5px] shrink-0" viewBox="0 0 9 5"><path d="M0 0h9L4.500 5z" fill="#8b8b8b"/></svg>
</div>
</div>

<!-- Desktop panel -->
<div class="h-[41px] shrink-0 bg-[#2e2e2e] border-t border-[#1f1f1f] flex items-stretch font-['Noto_Sans',sans-serif]">
  <div class="w-[58px] shrink-0 flex items-center pl-[5px]"><svg class="size-8" viewBox="0 0 32 32" fill="none" stroke="#dcdcdc"><circle cx="16" cy="16" r="14.500" stroke-width="2.400"/><path d="M9 8v10.500q0 4.500 4.500 4.500h6q4.500 0 4.500-4.500V14q0-3-2.500-3t-2.500 3v4.500M19 14q0-3-2.500-3T14 14v4.500" stroke-width="2.500"/></svg><div class="ml-[13px] w-px h-[38px] bg-[#484848]"></div></div>
  <div class="flex gap-[2px] pl-px shrink-0">
    <div class="w-[38px] border-b-2 border-[#77777a] flex items-center justify-center"><svg class="w-7 h-[26px]" viewBox="0 0 28 26"><path fill="#d99a3c" d="M0 1q0-1 1-1h9l2 3h15q1 0 1 1v8H0z"/><path fill="#fff" d="M2 5h24v4H2z"/><path fill="#f8c574" d="M0 7.500h28V25q0 1-1 1H1q-1 0-1-1z"/></svg></div>
    <div class="w-[38px] border-b-2 border-[#8a8a8d] bg-[#555557] flex items-center justify-center"><svg class="size-7" viewBox="0 0 28 28"><defs><clipPath id="rc"><rect width="28" height="28" rx="5"/></clipPath></defs><g clip-path="url(#rc)"><path fill="#e25a4a" d="M0 0h28v10H14L7 18 0 7z"/><path fill="#4aa84e" d="M0 6l8 12 6 3-4 7H0z"/><path fill="#fbcc1c" d="M28 9H14l7 9-8 10h15z"/></g><circle cx="14" cy="14" r="8" fill="#fff"/><circle cx="14" cy="14" r="6.400" fill="#4586cc"/></svg></div>
    <div class="w-[38px] border-b-2 border-transparent flex items-center justify-center"><svg class="size-8" viewBox="0 0 32 32"><circle cx="16" cy="16" r="16" fill="#f6f6f6"/><path d="M8 7l8 10 8-10M16 16v12" fill="none" stroke="#f02b25" stroke-width="4"/></svg></div>
    <div class="w-[38px] border-b-2 border-transparent flex items-center justify-center"><div class="size-8 rounded-[14px] bg-[#0b5cff] text-white text-[9.500px] leading-[30px] font-medium text-center font-[Inter,sans-serif] tracking-[-0.500px]">zoom</div></div>
    <div class="w-[38px] border-b-2 border-transparent flex items-center justify-center"><svg class="size-[26px]" viewBox="0 0 26 26"><rect width="26" height="26" rx="5" fill="#fff"/><path fill="#4a3b34" d="M4 4.500c2-1 4 0 5 3.500l1.500 6 1.500 7c-5-1-8-8-8-16.500zM12 5c3-2.500 8-2 9 2.500.5 3-1 5-3 7l-4 3-2-5z"/><path fill="#8a6d5c" d="M12 7l3 .5-.5 5-2.500 1z"/><circle cx="18" cy="18" r="4" fill="#4dc0b0"/><circle cx="18" cy="18" r="1.800" fill="none" stroke="#2f8f84"/></svg></div>
    <div class="w-[38px] border-b-2 border-transparent flex items-center justify-center"><svg class="size-[29px]" viewBox="0 0 29 29"><rect x=".5" y=".5" width="28" height="28" rx="5" fill="#242426" stroke="#171717"/><path fill="#7446d6" d="M15.500 4l4 4.500.5 5 2.500 4.500-4 7-5.500-2.500-6-2 2.500-6 .5-6z"/><path fill="#b49af0" d="M15.500 4L12 13l1.500 9-6-1.500 2.500-6 .5-6z"/><path fill="#9b79ea" d="M13 14l7-.5 2.500 4.500-9 4z"/></svg></div>
    <div class="w-[38px] border-b-2 border-transparent flex items-center justify-center"><svg class="size-7"><use href="#telegram"/></svg></div>
    <div class="w-[38px] border-b-2 border-transparent flex items-center justify-center"><svg class="size-[29px]" viewBox="0 0 29 29"><rect x=".5" y=".5" width="28" height="28" rx="4" fill="#b50000" stroke="#800"/><path d="M7 22L10.500 6.500H19M9 13h7M14.500 14.500h8l-8.500 8h8" fill="none" stroke="#fff" stroke-width="2.800"/></svg></div>
    <div class="w-[38px] border-b-2 border-[#77777a] flex items-center justify-center"><div class="size-[29px] rounded-[5px] bg-[#2a2a2a] border border-[#151515] text-white font-['Liberation_Mono',monospace] text-[9px] leading-3 pl-[3px]">$_</div></div>
    <div class="w-[38px] border-b-2 border-[#77777a] flex items-center justify-center relative"><svg class="size-7" viewBox="0 0 28 28"><path fill="#1f9cf0" d="M20 0l8 3v22l-8 3z"/><path d="M21 3L1.500 19M1.500 9L21 25" stroke="#0b76c4" stroke-width="4"/></svg><div class="absolute left-px top-px w-4 h-[15px] rounded-full bg-[#6b6e75] text-white font-bold text-[11px] leading-[15px] text-center">2</div></div>
    <div class="w-[38px] border-b-2 border-[#77777a] bg-[#f3484f] flex items-center justify-center"><svg class="size-7"><use href="#telegram"/></svg></div>
    <div class="w-[38px] border-b-2 border-[#77777a] flex items-center justify-center"><svg class="size-7" viewBox="0 0 28 28"><rect width="28" height="28" rx="4" fill="#1d7fbf"/><path d="M5 8h10M5 12h18M5 16h18M5 20h18" stroke="#fff" stroke-width="2"/></svg></div>
    <div class="w-[38px] border-b-2 border-[#77777a] flex items-center justify-center"><svg class="size-7" viewBox="0 0 28 28"><rect width="28" height="28" rx="4" fill="#a5a5a5"/><circle cx="14" cy="14" r="11" fill="#f4f4f4"/><g fill="none" stroke-width="6"><path d="M7 14a7 7 0 0 1 7-7" stroke="#e8643a"/><path d="M14 7a7 7 0 0 1 7 7" stroke="#f0b23c"/><path d="M21 14a7 7 0 0 1-7 7" stroke="#4d7fc0"/><path d="M14 21a7 7 0 0 1-7-7" stroke="#4d5fc0"/></g><path d="M5 18a9 9 0 0 0 3 4l3-4z" fill="#5cae5c"/><circle cx="14" cy="14" r="4" fill="#f6f6f6"/></svg></div>
    <div class="w-[38px] border-b-2 border-[#77777a] flex items-center justify-center"><svg class="size-7" viewBox="0 0 28 28"><rect width="28" height="28" rx="4" fill="#db6467"/><g fill="none" stroke="#fff" stroke-width="1.800"><circle cx="8.500" cy="17.500" r="4"/><circle cx="19.500" cy="17.500" r="4"/><path d="M3.500 15.500h21M4.500 14l4-7.500 3 3.500M23.500 14l-4-7.500-3 3.500"/></g></svg></div>
  </div>
  <div class="flex-1"></div>
  <div class="flex items-center shrink-0 text-[#e2e2e2]">
    <div class="relative size-[24px] -ml-px"><svg class="size-[22px]"><use href="#telegram"/></svg><div class="absolute left-[6px] top-[7px] w-[17px] h-[17px] rounded-[5px] bg-[#f03c3c] text-white text-[11.500px] leading-[17px] text-center">23</div></div>
    <svg class="ml-[7px] w-[15px] h-4" viewBox="0 0 15 16"><path d="M7.500 1L14 3.200Q14 12 7.500 15.200 1 12 1 3.200z" fill="#2e2e2e" stroke="#ddd" stroke-width="1.500"/><path d="M7.500 3l4.500 1.500Q12 10.500 7.500 13.300 3 10.500 3 4.500z" fill="#b01217"/><path d="M7.500 5v4.200M7.500 10.200V12" stroke="#fff" stroke-width="1.700"/></svg>
    <svg class="ml-[13px] w-[27px] h-[19px]" viewBox="0 0 27 19"><rect width="27" height="19" fill="#f2e8ea"/><path d="M0 .75h27M0 3.700h27M0 6.600h27M0 9.500h27M0 12.400h27M0 15.300h27M0 18.200h27" stroke="#c8374b" stroke-width="1.500"/><rect width="14.500" height="10.200" fill="#46487c"/><path d="M1 2h13M1 5h13M1 8h13" stroke="#b9bad2" stroke-width="1" stroke-dasharray="1 1.500"/></svg>
    <svg class="ml-[12px] w-4 h-[13px]" viewBox="0 0 16 13" fill="none" stroke-width="2"><path d="M.8 4.500q7.200-6.500 14.400 0" stroke="#777"/><path d="M3.300 7q4.700-4 9.400 0M5.500 9.500q2.500-2 5 0" stroke="#ddd"/><circle cx="8" cy="11.800" r=".8" fill="#ddd" stroke="#ddd" stroke-width="1"/></svg>
    <svg class="ml-[10px] w-4 h-[14px]" viewBox="0 0 16 14"><path fill="#ddd" d="M0 4.500h2.500L6 1v12L2.500 9.500H0z"/><path d="M8 4q1.500 3 0 6M10.500 2.500q2.500 4.500 0 9M13 1q3.500 6 0 12" fill="none" stroke="#ddd" stroke-width="1.500"/></svg>
    <svg class="ml-[12px] w-[15px] h-4" viewBox="0 0 15 16"><path d="M4 1.500h4M1.500 3.200h9v11.600h-9z" fill="none" stroke="#ddd" stroke-width="1.800"/><path fill="#ddd" d="M7.500 4.500L4 9h2.500l-1 4L9 8.500H6.500z"/><path fill="#aaa" stroke="#2e2e2e" stroke-width=".6" d="M12 6.500L8.500 11H11l-1 4.500L14.500 10H12z"/></svg>
    <div class="ml-[8px] pt-[2px] w-[144px] text-[12.500px] font-bold whitespace-nowrap tracking-[-0.080px]">Среда марта 12, 20:36</div>
    <div class="ml-[7px] mr-1 w-2 h-8 bg-[#464646]"></div>
  </div>
</div>
</body>
</html>
